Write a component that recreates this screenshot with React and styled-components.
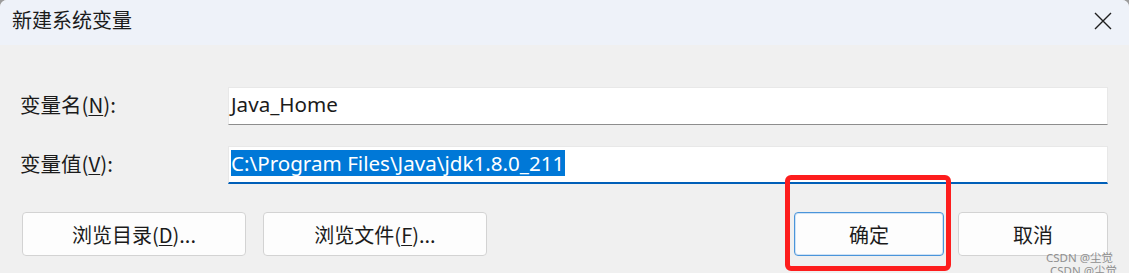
import React from 'react';
import styled, { createGlobalStyle } from 'styled-components';

const GlobalStyle = createGlobalStyle`
  html, body {
    margin: 0;
    padding: 0;
    background: #9c9c9c;
  }
  #root {
    width: 1129px;
    height: 273px;
  }
`;

const Window = styled.div`
  position: relative;
  width: 1129px;
  height: 273px;
  background: #f0f0f0;
  border-radius: 7px 7px 0 0;
  overflow: hidden;
  display: flex;
  flex-direction: column;
  font-family: "Noto Sans CJK SC", "Noto Sans", sans-serif;
  color: #1b1b1b;
`;

const TitleBar = styled.div`
  height: 45px;
  flex-shrink: 0;
  background: #eef2f9;
  display: flex;
  align-items: center;
  justify-content: space-between;
  padding: 0 17px 0 12px;
  box-sizing: border-box;
`;

const Title = styled.div`
  font-size: 20px;
  line-height: 1;
  margin-top: -5px;
`;

const CloseIcon = styled.svg`
  width: 18px;
  height: 18px;
  margin-top: -4px;
`;

const Body = styled.div`
  display: flex;
  flex-direction: column;
  padding: 42px 21px 0 20px;
`;

const Form = styled.div`
  display: grid;
  grid-template-columns: 208px 880px;
  row-gap: 21px;
  align-items: center;
`;

const Label = styled.div`
  font-size: 20.5px;
  line-height: 1;
  white-space: nowrap;
  margin-top: -3px;
`;

const Mnemonic = styled.span`
  text-decoration: underline;
  text-underline-offset: 2px;
  text-decoration-thickness: 1px;
`;

const Field = styled.div`
  height: 38px;
  box-sizing: border-box;
  background: #ffffff;
  border: 1px solid #e8e8e8;
  border-bottom: ${p => (p.$focused ? '2px solid #005fb8' : '1px solid #8d8d8d')};
  display: flex;
  align-items: center;
  padding: 0 2px 4px;
  font-family: "Noto Sans", "Noto Sans CJK SC", sans-serif;
  font-size: 20.6px;
  white-space: nowrap;
`;

const Selection = styled.span`
  background: #0078d7;
  color: #ffffff;
  line-height: 26px;
  padding-right: 1px;
`;

const ButtonRow = styled.div`
  display: flex;
  justify-content: space-between;
  margin: 28px 0 0 2px;
`;

const ButtonGroup = styled.div`
  display: flex;
  gap: ${p => p.$gap}px;
`;

const Button = styled.div`
  width: ${p => p.$width}px;
  height: 44px;
  box-sizing: border-box;
  background: #fdfdfd;
  border: 1px solid ${p => (p.$primary ? '#4a95da' : '#d3d3d3')};
  box-shadow: ${p => (p.$primary ? 'inset 0 0 0 1px #cfe2f5' : 'none')};
  border-radius: 4px;
  display: flex;
  align-items: center;
  justify-content: center;
  font-size: 20px;
  line-height: 1;
  padding-top: 1px;
`;

const Highlight = styled.div`
  position: absolute;
  left: 785px;
  top: 175px;
  width: 166px;
  height: 96px;
  box-sizing: border-box;
  border: 5px solid #fd1d1d;
  border-radius: 6px;
  pointer-events: none;
`;

const Watermark = styled.div`
  position: absolute;
  left: ${p => p.$left}px;
  top: ${p => p.$top}px;
  font-family: "Noto Sans", "Noto Sans CJK SC", sans-serif;
  font-size: 11.5px;
  line-height: 1;
  color: #8f8f8f;
  white-space: nowrap;
`;

export default function App() {
  return (
    <>
      <GlobalStyle />
      <Window>
        <TitleBar>
          <Title>新建系统变量</Title>
          <CloseIcon viewBox="0 0 18 18">
            <path d="M1 1 L17 17 M17 1 L1 17" stroke="#1f1f1f" strokeWidth="1.4" fill="none" />
          </CloseIcon>
        </TitleBar>
        <Body>
          <Form>
            <Label>变量名(<Mnemonic>N</Mnemonic>):</Label>
            <Field>Java_Home</Field>
            <Label>变量值(<Mnemonic>V</Mnemonic>):</Label>
            <Field $focused>
              <Selection>C:\Program Files\Java\jdk1.8.0_211</Selection>
            </Field>
          </Form>
          <ButtonRow>
            <ButtonGroup $gap={17}>
              <Button $width={224}>浏览目录(<Mnemonic>D</Mnemonic>)...</Button>
              <Button $width={224}>浏览文件(<Mnemonic>F</Mnemonic>)...</Button>
            </ButtonGroup>
            <ButtonGroup $gap={14}>
              <Button $width={150} $primary>确定</Button>
              <Button $width={150}>取消</Button>
            </ButtonGroup>
          </ButtonRow>
        </Body>
        <Highlight />
        <Watermark $left={1046} $top={252}>CSDN @尘觉</Watermark>
        <Watermark $left={1050} $top={265}>CSDN @尘觉</Watermark>
      </Window>
    </>
  );
}
